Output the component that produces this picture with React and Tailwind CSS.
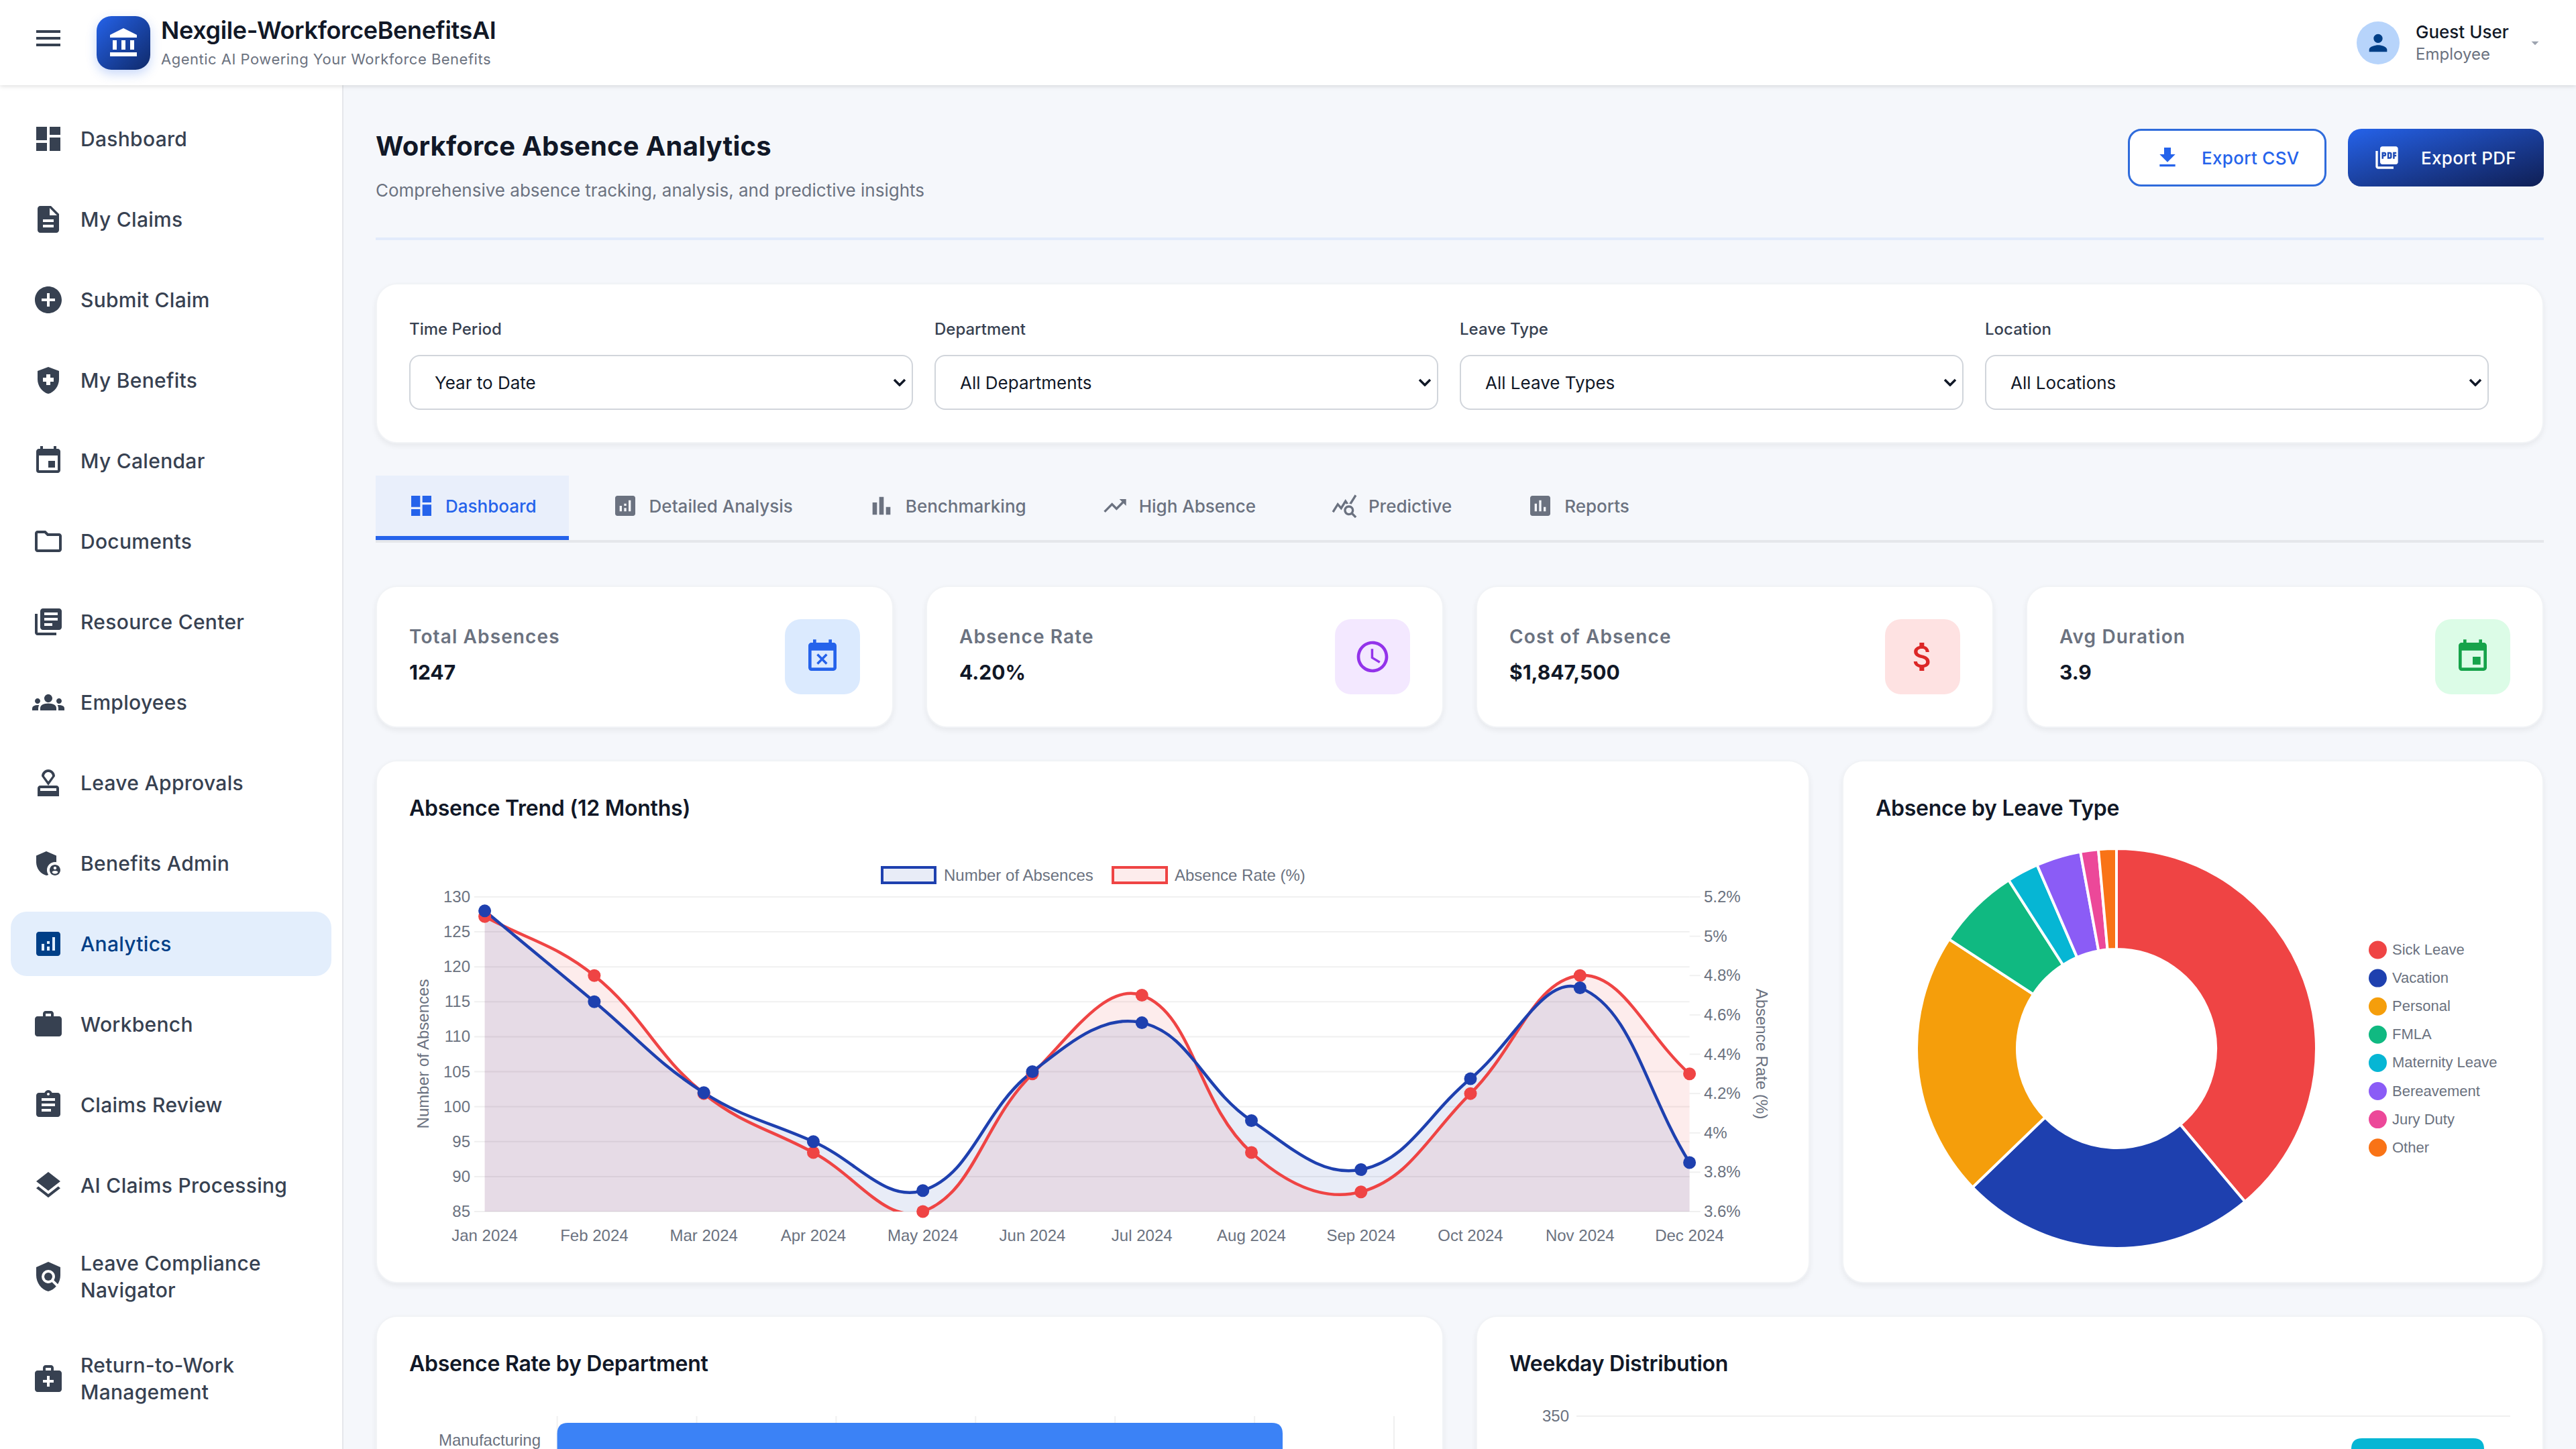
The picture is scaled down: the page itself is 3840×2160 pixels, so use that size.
import React from 'react';
import {
  MdMenu, MdAccountBalance, MdPerson, MdArrowDropDown, MdDashboard, MdDescription, MdAddCircle,
  MdHealthAndSafety, MdEvent, MdOutlineFolder, MdLibraryBooks, MdGroups, MdApproval,
  MdAdminPanelSettings, MdAnalytics, MdWork, MdAssignment, MdLayers, MdPolicy, MdMedicalServices,
  MdFileDownload, MdPictureAsPdf, MdBarChart, MdTrendingUp, MdQueryStats, MdAssessment,
  MdEventBusy, MdAccessTime, MdAttachMoney,
} from 'react-icons/md';

const navItems = [
  { label: 'Dashboard', icon: MdDashboard },
  { label: 'My Claims', icon: MdDescription },
  { label: 'Submit Claim', icon: MdAddCircle },
  { label: 'My Benefits', icon: MdHealthAndSafety },
  { label: 'My Calendar', icon: MdEvent },
  { label: 'Documents', icon: MdOutlineFolder },
  { label: 'Resource Center', icon: MdLibraryBooks },
  { label: 'Employees', icon: MdGroups },
  { label: 'Leave Approvals', icon: MdApproval },
  { label: 'Benefits Admin', icon: MdAdminPanelSettings },
  { label: 'Analytics', icon: MdAnalytics, active: true },
  { label: 'Workbench', icon: MdWork },
  { label: 'Claims Review', icon: MdAssignment },
  { label: 'AI Claims Processing', icon: MdLayers },
  { label: 'Leave Compliance Navigator', icon: MdPolicy },
  { label: 'Return-to-Work Management', icon: MdMedicalServices },
];

const filters = [
  { label: 'Time Period', value: 'Year to Date' },
  { label: 'Department', value: 'All Departments' },
  { label: 'Leave Type', value: 'All Leave Types' },
  { label: 'Location', value: 'All Locations' },
];

const tabs = [
  { label: 'Dashboard', icon: MdDashboard, active: true },
  { label: 'Detailed Analysis', icon: MdAnalytics },
  { label: 'Benchmarking', icon: MdBarChart },
  { label: 'High Absence', icon: MdTrendingUp },
  { label: 'Predictive', icon: MdQueryStats },
  { label: 'Reports', icon: MdAssessment },
];

const metrics = [
  { label: 'Total Absences', value: '1247', icon: MdEventBusy, box: 'bg-[#dbeafe] text-[#2563eb]' },
  { label: 'Absence Rate', value: '4.20%', icon: MdAccessTime, box: 'bg-[#f3e8ff] text-[#9333ea]' },
  { label: 'Cost of Absence', value: '$1,847,500', icon: MdAttachMoney, box: 'bg-[#fee2e2] text-[#dc2626]' },
  { label: 'Avg Duration', value: '3.9', icon: MdEvent, box: 'bg-[#dcfce7] text-[#16a34a]' },
];

const months = ['Jan', 'Feb', 'Mar', 'Apr', 'May', 'Jun', 'Jul', 'Aug', 'Sep', 'Oct', 'Nov', 'Dec'];
const absences = [128, 115, 102, 95, 88, 105, 112, 98, 91, 104, 117, 92];
const rates = [5.1, 4.8, 4.2, 3.9, 3.6, 4.3, 4.7, 3.9, 3.7, 4.2, 4.8, 4.3];

const leaveTypes = [
  { label: 'Sick Leave', value: 485, color: '#ef4444' },
  { label: 'Vacation', value: 298, color: '#1e40af' },
  { label: 'Personal', value: 267, color: '#f59e0b' },
  { label: 'FMLA', value: 84, color: '#10b981' },
  { label: 'Maternity Leave', value: 32, color: '#06b6d4' },
  { label: 'Bereavement', value: 45, color: '#8b5cf6' },
  { label: 'Jury Duty', value: 18, color: '#ec4899' },
  { label: 'Other', value: 18, color: '#f97316' },
];

const CHART_LEFT = 722.6;
const CHART_STEP = 163.27;
const CHART_TOP = 1338;
const CHART_BOTTOM = 1807;

const xAt = (i) => CHART_LEFT + i * CHART_STEP;
const yAbs = (v) => CHART_BOTTOM - ((v - 85) / 45) * (CHART_BOTTOM - CHART_TOP);
const yRate = (v) => CHART_BOTTOM - ((v - 3.6) / 1.6) * (CHART_BOTTOM - CHART_TOP);

// same control points chart.js gets from tension 0.4
const splinePath = (pts) => {
  const t = 0.4;
  const ctrl = pts.map((p, i) => {
    const prev = pts[i - 1] || p;
    const next = pts[i + 1] || p;
    const d01 = Math.hypot(p.x - prev.x, p.y - prev.y);
    const d12 = Math.hypot(next.x - p.x, next.y - p.y);
    const total = d01 + d12 || 1;
    const fa = (t * d01) / total;
    const fb = (t * d12) / total;
    return {
      inX: p.x - fa * (next.x - prev.x),
      inY: p.y - fa * (next.y - prev.y),
      outX: p.x + fb * (next.x - prev.x),
      outY: p.y + fb * (next.y - prev.y),
    };
  });
  let d = `M${pts[0].x} ${pts[0].y}`;
  for (let i = 1; i < pts.length; i++) {
    d += ` C${ctrl[i - 1].outX} ${ctrl[i - 1].outY} ${ctrl[i].inX} ${ctrl[i].inY} ${pts[i].x} ${pts[i].y}`;
  }
  return d;
};

const Card = ({ children, className = '' }) => (
  <div className={`bg-white border-2 border-[#f1f3f6] rounded-[32px] shadow-[0_4px_8px_rgba(0,0,0,0.06)] p-12 ${className}`}>
    {children}
  </div>
);

const CardTitle = ({ children }) => (
  <h3 className="text-[32px] leading-[43px] font-semibold tracking-[-0.25px] text-[#111827] mb-[37px]">{children}</h3>
);

const Header = () => (
  <header className="relative z-10 h-[127px] shrink-0 bg-white shadow-[0_2px_6px_rgba(0,0,0,0.12)] flex items-center pl-12 pr-[48px]">
    <MdMenu className="w-12 h-12 text-[#374151] mb-[14px] shrink-0" />
    <div className="ml-12 w-20 h-20 rounded-[22px] bg-gradient-to-br from-[#2563eb] to-[#0f2a6b] shadow-[0_6px_16px_rgba(37,99,235,0.25)] flex items-center justify-center text-white">
      <MdAccountBalance className="w-12 h-12" />
    </div>
    <div className="ml-4 flex flex-col">
      <span className="text-[36px] leading-[46px] font-semibold tracking-[-0.36px] text-[#111827]">Nexgile-WorkforceBenefitsAI</span>
      <span className="text-[22px] leading-[36px] mt-[2px] text-[#6b7280] tracking-[0.5px]">Agentic AI Powering Your Workforce Benefits</span>
    </div>
    <div className="ml-auto flex items-center">
      <div className="w-16 h-16 rounded-full bg-[#b7d4fb] flex items-center justify-center text-[#003f87]">
        <MdPerson className="w-10 h-10" />
      </div>
      <div className="ml-6 w-[147px] flex flex-col">
        <span className="text-[26px] leading-[34px] font-medium text-[#111827]">Guest User</span>
        <span className="text-[24px] leading-[32px] text-[#6b7280]">Employee</span>
      </div>
      <MdArrowDropDown className="ml-[18px] w-[26px] h-[26px] text-[#9ca3af]" />
    </div>
  </header>
);

const Sidebar = () => (
  <aside className="w-[512px] shrink-0 bg-white border-r-2 border-[#e5e7eb] pt-[32px] px-4 flex flex-col gap-6 overflow-hidden">
    {navItems.map(({ label, icon: Icon, active }) => (
      <div
        key={label}
        className={`flex items-center gap-6 px-8 py-6 rounded-[24px] shrink-0 ${active ? 'bg-[#e3eefc] text-[#003f87]' : 'text-[#374151]'}`}
      >
        <Icon className="w-12 h-12 shrink-0" />
        <span className="text-[30px] leading-[40px] font-medium tracking-[0.3px]">{label}</span>
      </div>
    ))}
  </aside>
);

const PageHeading = () => (
  <div className="flex items-start justify-between border-b-4 border-[#e2ebfb] pb-[50px] mb-[64px]">
    <div className="pt-[15px]">
      <h1 className="text-[40px] leading-[56px] font-bold tracking-[0.2px] text-[#111827] mb-[18px]">Workforce Absence Analytics</h1>
      <p className="text-[26px] leading-[40px] text-[#6b7280]">Comprehensive absence tracking, analysis, and predictive insights</p>
    </div>
    <div className="flex gap-8 mt-[17px]">
      <button className="w-[296px] h-[86px] flex items-center pl-[36px] gap-[31px] border-[3px] border-[#2f6bdb] bg-white rounded-[20px] text-[#2563eb] text-[26px] tracking-[0.3px] font-medium">
        <MdFileDownload className="w-10 h-10 shrink-0" />
        Export CSV
      </button>
      <button className="w-[292px] h-[86px] flex items-center pl-[38px] gap-[31px] rounded-[20px] bg-gradient-to-br from-[#2563eb] to-[#0f1f55] text-white text-[26px] tracking-[0.3px] font-medium">
        <MdPictureAsPdf className="w-10 h-10 shrink-0" />
        Export PDF
      </button>
    </div>
  </div>
);

const Filters = () => (
  <Card className="mb-12 grid grid-cols-4">
    {filters.map((f) => (
      <div key={f.label} className="pr-8">
        <label className="block text-[24px] leading-[38px] font-medium text-[#374151] mb-[19px]">{f.label}</label>
        <div className="relative">
          <select defaultValue={f.value} className="appearance-none w-full h-[82px] bg-white border-2 border-[#d1d5db] rounded-[16px] pl-9 pr-12 text-[26px] text-[#111827]">
            <option>{f.value}</option>
          </select>
          <svg viewBox="0 0 20 12" className="absolute right-[10px] top-[35px] w-[20px] h-[12px] pointer-events-none">
            <path d="M2 2 L10 10 L18 2" fill="none" stroke="#111827" strokeWidth="3.5" />
          </svg>
        </div>
      </div>
    ))}
  </Card>
);

const Tabs = () => (
  <div className="flex gap-4 border-b-4 border-[#e5e7eb] mb-16">
    {tabs.map(({ label, icon: Icon, active }) => (
      <div
        key={label}
        className={`h-[96px] flex items-center gap-4 px-12 text-[26px] font-medium border-b-[6px] ${active ? 'bg-[#e9effb] text-[#2563eb] border-[#2563eb]' : 'text-[#6b7280] border-transparent'}`}
      >
        <Icon className="w-10 h-10 shrink-0" />
        {label}
      </div>
    ))}
  </div>
);

const Metrics = () => (
  <div className="grid grid-cols-4 gap-12 mb-12">
    {metrics.map(({ label, value, icon: Icon, box }) => (
      <Card key={label} className="flex items-center justify-between h-[212px]">
        <div className="pb-[5px]">
          <div className="text-[28px] leading-[36px] font-semibold text-[#6b7280] tracking-[1.12px] mb-[15px]">{label}</div>
          <div className="text-[30px] leading-[40px] font-bold text-[#111827]">{value}</div>
        </div>
        <div className={`w-[112px] h-[112px] rounded-[24px] flex items-center justify-center ${box}`}>
          <Icon className="w-14 h-14" />
        </div>
      </Card>
    ))}
  </div>
);

const TrendChart = () => {
  const abs = absences.map((v, i) => ({ x: xAt(i), y: yAbs(v) }));
  const rate = rates.map((v, i) => ({ x: xAt(i), y: yRate(v) }));
  const closeArea = ` L${xAt(11)} ${CHART_BOTTOM} L${xAt(0)} ${CHART_BOTTOM} Z`;
  return (
    <svg viewBox="610 1264 2038 600" className="w-[2038px] h-[600px] block [font-family:'Liberation_Sans',Arial,sans-serif] text-[24px] fill-[#6b7280]">
      <rect x="1315" y="1294" width="79" height="23" fill="rgba(30,64,175,0.1)" stroke="#1e40af" strokeWidth="4" />
      <text x="1407" y="1314">Number of Absences</text>
      <rect x="1659" y="1294" width="80" height="23" fill="rgba(239,68,68,0.1)" stroke="#ef4444" strokeWidth="4" />
      <text x="1751" y="1314">Absence Rate (%)</text>

      {[130, 125, 120, 115, 110, 105, 100, 95, 90, 85].map((v) => (
        <g key={v}>
          <line x1="707" x2={xAt(11)} y1={yAbs(v)} y2={yAbs(v)} stroke="#f0f0f0" strokeWidth="2" />
          <text x="701" y={yAbs(v) + 8} textAnchor="end">{v}</text>
        </g>
      ))}
      {[
        ['5.2%', 5.2], ['5%', 5], ['4.8%', 4.8], ['4.6%', 4.6], ['4.4%', 4.4],
        ['4.2%', 4.2], ['4%', 4], ['3.8%', 3.8], ['3.6%', 3.6],
      ].map(([label, v]) => (
        <g key={label}>
          <line x1={xAt(11)} x2={xAt(11) + 16} y1={yRate(v)} y2={yRate(v)} stroke="#f0f0f0" strokeWidth="2" />
          <text x="2540" y={yRate(v) + 8}>{label}</text>
        </g>
      ))}
      {months.map((m, i) => (
        <text key={m} x={xAt(i)} y="1851" textAnchor="middle">{m} 2024</text>
      ))}
      <text transform="translate(639 1572) rotate(-90)" textAnchor="middle">Number of Absences</text>
      <text transform="translate(2618 1572) rotate(90)" textAnchor="middle">Absence Rate (%)</text>

      <clipPath id="trendClip">
        <rect x="700" y={CHART_TOP} width="1840" height={CHART_BOTTOM - CHART_TOP} />
      </clipPath>
      <g clipPath="url(#trendClip)">
        <path d={splinePath(rate) + closeArea} fill="rgba(239,68,68,0.1)" />
        <path d={splinePath(abs) + closeArea} fill="rgba(30,64,175,0.1)" />
        <path d={splinePath(rate)} fill="none" stroke="#ef4444" strokeWidth="4.5" />
        <path d={splinePath(abs)} fill="none" stroke="#1e40af" strokeWidth="4.5" />
      </g>
      {rate.map((p, i) => <circle key={i} cx={p.x} cy={p.y} r="9.5" fill="#ef4444" />)}
      {abs.map((p, i) => <circle key={i} cx={p.x} cy={p.y} r="9.5" fill="#1e40af" />)}
    </svg>
  );
};

const DonutChart = () => {
  const cx = 3155;
  const cy = 1564;
  const outer = 298;
  const inner = 148;
  const total = leaveTypes.reduce((sum, t) => sum + t.value, 0);
  let start = 0;
  const slices = leaveTypes.map((t) => {
    const a0 = (start / total) * 2 * Math.PI;
    start += t.value;
    const a1 = (start / total) * 2 * Math.PI;
    const large = a1 - a0 > Math.PI ? 1 : 0;
    const pt = (r, a) => `${cx + r * Math.sin(a)} ${cy - r * Math.cos(a)}`;
    const d = `M${pt(outer, a0)} A${outer} ${outer} 0 ${large} 1 ${pt(outer, a1)} L${pt(inner, a1)} A${inner} ${inner} 0 ${large} 0 ${pt(inner, a0)} Z`;
    return { ...t, d };
  });
  return (
    <svg viewBox="2796 1264 946 600" className="w-[946px] h-[600px] block [font-family:'Liberation_Sans',Arial,sans-serif] text-[22px] fill-[#6b7280]">
      {slices.map((s) => (
        <path key={s.label} d={s.d} fill={s.color} stroke="#ffffff" strokeWidth="4" />
      ))}
      {leaveTypes.map((t, i) => (
        <g key={t.label}>
          <circle cx="3544.5" cy={1417 + i * 42.1} r="13.5" fill={t.color} />
          <text x="3566" y={1417 + i * 42.1 + 7}>{t.label}</text>
        </g>
      ))}
    </svg>
  );
};

const DepartmentChart = () => (
  <svg viewBox="610 2092 1492 600" className="w-[1492px] h-[600px] block [font-family:'Liberation_Sans',Arial,sans-serif] text-[24px] fill-[#6b7280]">
    {[830.6, 1038.5, 1246.4, 1454.3, 1662.2, 1870.1, 2078].map((x) => (
      <line key={x} x1={x} x2={x} y1="2112" y2="2692" stroke="#f0f0f0" strokeWidth="2" />
    ))}
    <path d="M830.6 2200 V2138 Q830.6 2122 846.6 2122 H1896 Q1912 2122 1912 2138 V2200 Z" fill="#3b82f6" />
    <text x="806" y="2156" textAnchor="end">Manufacturing</text>
  </svg>
);

const WeekdayChart = () => (
  <svg viewBox="2250 2092 1492 600" className="w-[1492px] h-[600px] block [font-family:'Liberation_Sans',Arial,sans-serif] text-[24px] fill-[#6b7280]">
    <line x1="2350" x2="3742" y1="2112" y2="2112" stroke="#f0f0f0" strokeWidth="2" />
    <text x="2339" y="2120" textAnchor="end">350</text>
    <path d="M3505 2200 V2161 Q3505 2145 3521 2145 H3687 Q3703 2145 3703 2161 V2200 Z" fill="#06b6d4" />
  </svg>
);

const App = () => (
  <div className="h-screen w-screen overflow-hidden flex flex-col bg-[#f5f7fb] [font-family:Inter,sans-serif]">
    <Header />
    <div className="flex flex-1 min-h-0">
      <Sidebar />
      <main className="flex-1 overflow-hidden pt-12 px-12">
        <PageHeading />
        <Filters />
        <Tabs />
        <Metrics />
        <div className="grid grid-cols-[2138px_1fr] gap-12 mb-12">
          <Card className="h-[780px]">
            <CardTitle>Absence Trend (12 Months)</CardTitle>
            <TrendChart />
          </Card>
          <Card className="h-[780px]">
            <CardTitle>Absence by Leave Type</CardTitle>
            <DonutChart />
          </Card>
        </div>
        <div className="grid grid-cols-2 gap-12">
          <Card>
            <CardTitle>Absence Rate by Department</CardTitle>
            <DepartmentChart />
          </Card>
          <Card>
            <CardTitle>Weekday Distribution</CardTitle>
            <WeekdayChart />
          </Card>
        </div>
      </main>
    </div>
  </div>
);

export default App;
